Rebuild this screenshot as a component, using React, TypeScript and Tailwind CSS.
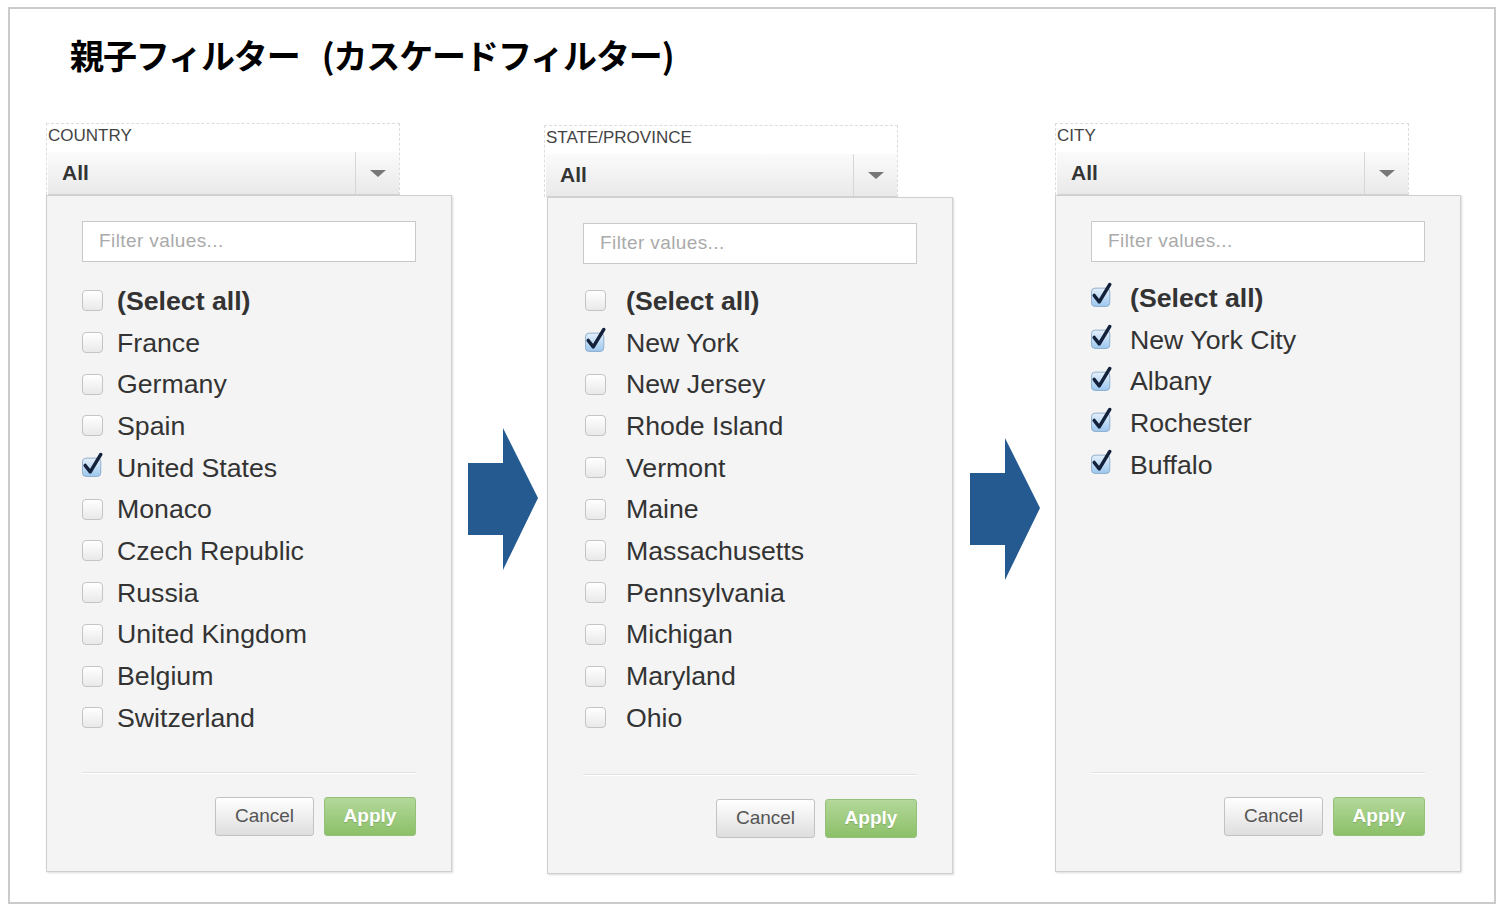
import React from "react";

type Item = { label: string; checked?: boolean; bold?: boolean };

type FilterProps = {
	title: string;
	items: Item[];
	listShift?: string;
	boxPad?: string;
	textGap?: string;
	headerShift?: string;
};

const countries: Item[] = [
	{ label: "(Select all)", bold: true },
	{ label: "France" },
	{ label: "Germany" },
	{ label: "Spain" },
	{ label: "United States", checked: true },
	{ label: "Monaco" },
	{ label: "Czech Republic" },
	{ label: "Russia" },
	{ label: "United Kingdom" },
	{ label: "Belgium" },
	{ label: "Switzerland" },
];

const states: Item[] = [
	{ label: "(Select all)", bold: true },
	{ label: "New York", checked: true },
	{ label: "New Jersey" },
	{ label: "Rhode Island" },
	{ label: "Vermont" },
	{ label: "Maine" },
	{ label: "Massachusetts" },
	{ label: "Pennsylvania" },
	{ label: "Michigan" },
	{ label: "Maryland" },
	{ label: "Ohio" },
];

const cities: Item[] = [
	{ label: "(Select all)", bold: true, checked: true },
	{ label: "New York City", checked: true },
	{ label: "Albany", checked: true },
	{ label: "Rochester", checked: true },
	{ label: "Buffalo", checked: true },
];

function CheckBox({ checked }: { checked?: boolean }) {
	if (!checked) {
		return (
			<span className="block w-[21px] h-[21px] rounded-[4px] border border-[#c4c4c4] bg-gradient-to-b from-[#ffffff] to-[#e9e9e9] shadow-[inset_0_1px_0_#fff]" />
		);
	}
	return (
		<svg width="24" height="26" viewBox="0 0 24 26" className="-mt-[5px]">
			<defs>
				<linearGradient id="cbg" x1="0" y1="0" x2="0" y2="1">
					<stop offset="0" stopColor="#e4f0fb" />
					<stop offset="1" stopColor="#9cc7ee" />
				</linearGradient>
			</defs>
			<rect x="0.5" y="5.5" width="20" height="20" rx="4" fill="url(#cbg)" stroke="#8aa9c8" />
			<path d="M3.5 13.5 L9 20.5 L20.5 1.5" fill="none" stroke="#14213b" strokeWidth="3.8" strokeLinejoin="round" strokeLinecap="round" />
		</svg>
	);
}

function Arrow() {
	return (
		<svg width="70" height="142" viewBox="0 0 70 142">
			<polygon points="0,35 35,35 35,0 70,70 35,142 35,107 0,107" fill="#245a90" />
		</svg>
	);
}

function CascadeFilter({
	title,
	items,
	listShift = "mt-[18px]",
	boxPad = "pl-0",
	textGap = "gap-[13px]",
	headerShift = "ml-0",
}: FilterProps) {
	return (
		<div className="w-[406px]">
			<div className={`w-[354px] border border-dashed border-[#dcdcdc] border-b-0 ${headerShift}`}>
				<div className="h-[28px] pt-[1px] pl-[1px] text-[17px] text-[#444] leading-[22px]">{title}</div>
				<div className="h-[43px] flex bg-gradient-to-b from-[#fbfbfb] to-[#e9e9e9] border-b border-[#d4d4d4] ml-[1px]">
					<div className="flex-1 flex items-center pl-[14px] text-[21px] font-bold text-[#333]">All</div>
					<div className="w-[44px] border-l border-[#d6d6d6] flex items-center justify-center">
						<span className="block w-0 h-0 border-l-[8px] border-r-[8px] border-t-[7px] border-l-transparent border-r-transparent border-t-[#777]" />
					</div>
				</div>
			</div>
			<div className="h-[677px] border border-[#cfcfcf] bg-[#f4f4f4] shadow-[1px_1px_2px_rgba(0,0,0,0.15)] flex flex-col pt-[25px] px-[35px] pb-[35px]">
				<div className="h-[41px] border border-[#c9c9c9] bg-white flex items-center pl-[16px] text-[19px] tracking-[0.4px] text-[#aaa]">
					Filter values...
				</div>
				<div className={`flex-1 ${listShift}`}>
					{items.map((it) => (
						<div key={it.label} className={`h-[41.7px] flex items-center ${textGap} ${boxPad}`}>
							<div className="w-[22px] flex justify-start">
								<CheckBox checked={it.checked} />
							</div>
							<span className={`text-[26.7px] text-[#333] ${it.bold ? "font-bold" : ""}`}>{it.label}</span>
						</div>
					))}
				</div>
				<div className="border-t border-[#e1e1e1] border-b border-b-white" />
				<div className="mt-[23px] flex justify-end gap-[10px]">
					<button className="w-[99px] h-[39px] rounded-[3px] border border-[#c2c2c2] bg-gradient-to-b from-[#ffffff] to-[#dedede] text-[19px] text-[#555]">
						Cancel
					</button>
					<button className="w-[92px] h-[39px] rounded-[3px] border border-[#95c07a] bg-gradient-to-b from-[#b3d89a] to-[#8cc068] text-[19px] font-bold text-white [text-shadow:0_1px_1px_rgba(0,0,0,0.15)]">
						Apply
					</button>
				</div>
			</div>
		</div>
	);
}

export default function App() {
	return (
		<div className="w-[1502px] h-[907px] bg-white pt-[7px] pl-[8px] font-['Liberation_Sans',Arial,sans-serif]">
			<div className="w-[1488px] h-[897px] border-2 border-[#cbcbcb] bg-white">
				<div className="h-[114px] pl-[60px] pt-[22px]">
					<h1 className="text-[34px] tracking-[-1.1px] font-bold text-black leading-[48px] font-['Noto_Sans_CJK_JP','Noto_Sans',sans-serif]">
						親子フィルター<span className="ml-[22px]">(カスケードフィルター)</span>
					</h1>
				</div>
				<div className="flex items-start pl-[36px]">
					<CascadeFilter title="COUNTRY" items={countries} />
					<div className="w-[95px] pl-[16px] mt-[305px]">
						<Arrow />
					</div>
					<div className="mt-[2px]">
						<CascadeFilter
							title="STATE/PROVINCE"
							items={states}
							listShift="mt-[16px]"
							boxPad="pl-[2px]"
							textGap="gap-[19px]"
							headerShift="-ml-[3px]"
						/>
					</div>
					<div className="w-[102px] pl-[17px] mt-[315px]">
						<Arrow />
					</div>
					<CascadeFilter title="CITY" items={cities} listShift="mt-[15px]" textGap="gap-[17px]" />
				</div>
			</div>
		</div>
	);
}
